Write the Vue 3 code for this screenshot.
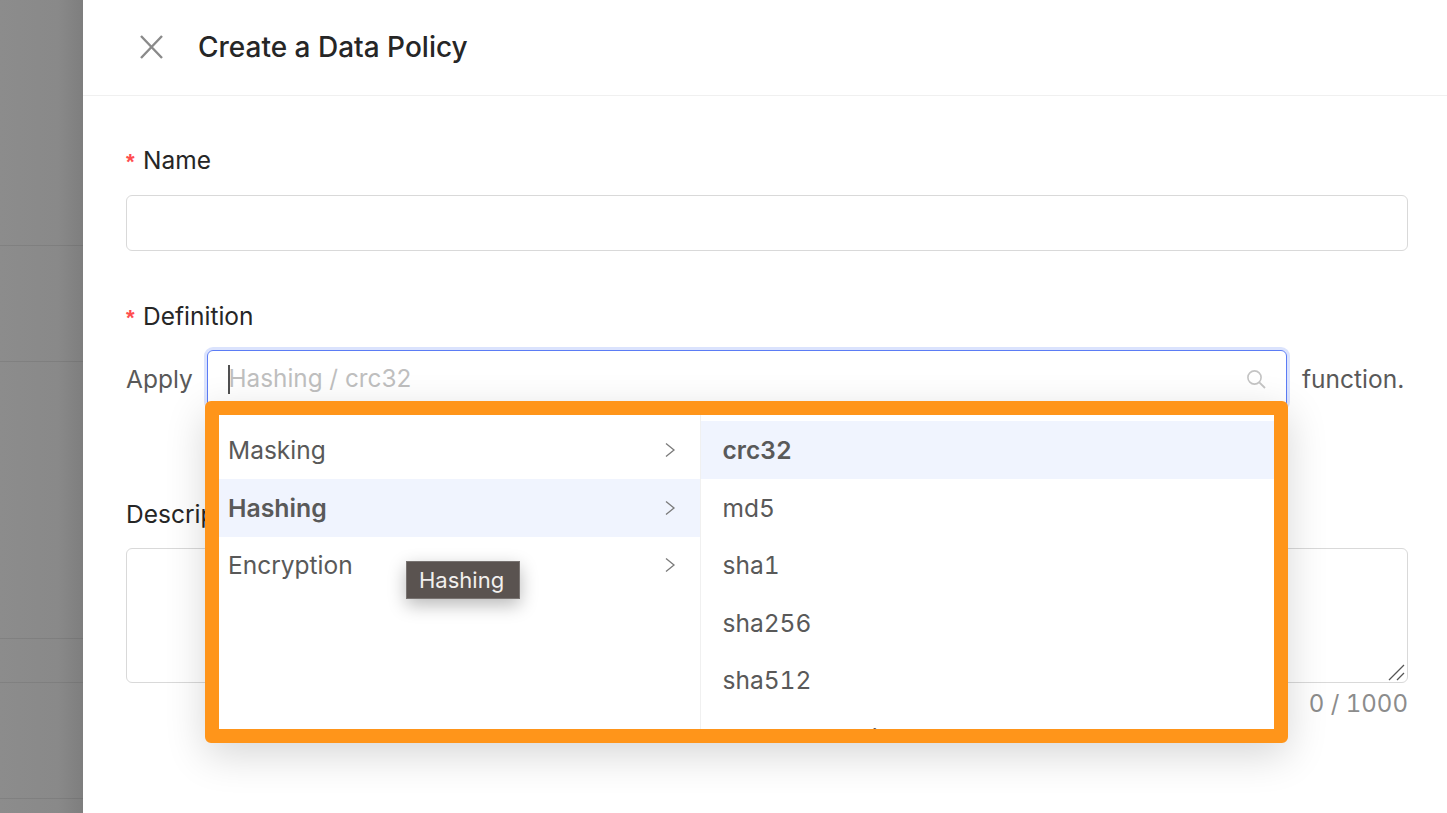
<template>
  <div class="page">
    <!-- dimmed page behind the drawer -->
    <div class="backdrop">
      <div class="bg-line" v-for="y in bgLines" :key="y" :style="{ top: y + 'px' }"></div>
    </div>

    <div class="drawer">
      <div class="drawer-header">
        <svg class="close-icon" width="24" height="24" viewBox="0 0 24 24">
          <path d="M2 1 L23 23 M23 1 L2 23" stroke="#8a8a8a" stroke-width="2.4" fill="none" />
        </svg>
        <h1 class="drawer-title">Create a Data Policy</h1>
      </div>

      <div class="drawer-body">
        <div class="field name-field">
          <label class="label"><span class="req">*</span>Name</label>
          <div class="input"></div>
        </div>

        <div class="field definition-field">
          <label class="label"><span class="req">*</span>Definition</label>
          <div class="def-row">
            <span class="def-text">Apply</span>
            <div class="select-wrap">
              <div class="select">
                <span class="caret"></span>
                <span class="placeholder">Hashing / crc32</span>
                <svg class="search-icon" width="22" height="22" viewBox="0 0 22 22">
                  <circle cx="9.5" cy="9.5" r="6.6" stroke="#c4c4c4" stroke-width="1.6" fill="none" />
                  <path d="M14.3 14.3 L20 20" stroke="#c4c4c4" stroke-width="1.8" fill="none" />
                </svg>
              </div>

              <!-- highlighted cascader menu -->
              <div class="dropdown">
                <div class="col col-left">
                  <div
                    v-for="item in groups"
                    :key="item"
                    class="opt"
                    :class="{ active: item === 'Hashing' }"
                  >
                    <span>{{ item }}</span>
                    <svg class="chev" width="12" height="18" viewBox="0 0 12 18">
                      <path d="M2 2.5 L10 9 L2 15.5" stroke="#7a7a7a" stroke-width="1.3" fill="none" />
                    </svg>
                  </div>
                </div>
                <div class="col col-right">
                  <div
                    v-for="item in functions"
                    :key="item"
                    class="opt"
                    :class="{ active: item === 'crc32' }"
                  >
                    {{ item }}
                  </div>
                </div>
                <div class="tooltip">Hashing</div>
              </div>
            </div>
            <span class="def-text fn">function.</span>
          </div>
        </div>

        <div class="field desc-field">
          <label class="label plain">Description</label>
          <div class="textarea">
            <svg class="resize" width="18" height="18" viewBox="0 0 18 18">
              <path d="M1 17 L16 2 M9 17 L16 10" stroke="#555" stroke-width="1.3" fill="none" />
            </svg>
          </div>
          <div class="count">0 / 1000</div>
        </div>
      </div>
    </div>
  </div>
</template>

<script setup>
const bgLines = [245, 361, 638, 682, 798];
const groups = ["Masking", "Hashing", "Encryption"];
const functions = ["crc32", "md5", "sha1", "sha256", "sha512", "sm3_hash_with_salt"];
</script>

<style>
html,
body {
  margin: 0;
  overflow: hidden;
  background: #fff;
}
</style>

<style scoped>
.page {
  display: flex;
  width: 1447px;
  height: 813px;
  overflow: hidden;
  font-family: Inter, "Liberation Sans", sans-serif;
  color: #262626;
}

.backdrop {
  position: relative;
  flex: 0 0 83px;
  background: linear-gradient(90deg, #8c8c8c 0%, #898989 70%, #7e7e7e 100%);
}

.bg-line {
  position: absolute;
  left: 0;
  right: 0;
  height: 1px;
  background: rgba(0, 0, 0, 0.08);
}

.drawer {
  flex: 1;
  background: #fff;
}

.drawer-header {
  display: flex;
  align-items: center;
  height: 95px;
  padding-left: 56px;
  border-bottom: 1px solid #f0f0f0;
  box-sizing: content-box;
}

.close-icon {
  flex: none;
  margin-right: 35px;
  margin-top: -1px;
}

.drawer-title {
  margin: 0 0 2px;
  font-size: 28px;
  font-weight: 500;
  line-height: 32px;
  color: #262626;
}

.drawer-body {
  padding: 0 39px 0 43px;
}

.field {
  display: flex;
  flex-direction: column;
}

.name-field {
  padding-top: 48px;
}

.definition-field {
  padding-top: 49px;
}

.desc-field {
  padding-top: 90px;
}

.label {
  font-size: 24.5px;
  line-height: 32px;
  color: #262626;
}

.req {
  display: inline-block;
  width: 17px;
  color: #ff4d4f;
  font-family: "Liberation Sans", sans-serif;
  font-size: 22px;
  font-weight: 700;
  line-height: 1;
}

.input {
  margin-top: 19px;
  height: 54px;
  border: 1px solid #d9d9d9;
  border-radius: 6px;
}

.def-row {
  display: flex;
  align-items: flex-start;
  margin-top: 18px;
}

.def-text {
  flex: none;
  width: 66px;
  font-size: 24.5px;
  line-height: 58px;
  color: #595959;
}

.fn {
  width: auto;
  margin-left: 15px;
}

.select-wrap {
  position: relative;
  z-index: 2;
  flex: none;
  width: 1080px;
  margin-left: 15px;
}

.select {
  display: flex;
  align-items: center;
  box-sizing: border-box;
  height: 58px;
  padding: 0 19px 0 20px;
  border: 1px solid #5b7cf5;
  border-radius: 6px;
  box-shadow: 0 0 0 3px #dbe3fd;
}

.caret {
  flex: none;
  width: 1.5px;
  height: 29px;
  background: #505050;
}

.placeholder {
  flex: 1;
  margin-top: -2px;
  margin-left: -1px;
  font-size: 24.3px;
  color: #bfbfbf;
}

.dropdown {
  position: absolute;
  left: -2px;
  top: 51px;
  display: flex;
  box-sizing: border-box;
  width: 1083px;
  height: 342px;
  border: 14px solid #ff951a;
  border-radius: 6px;
  background: #fff;
  box-shadow: 0 12px 40px rgba(0, 0, 0, 0.16);
}

.col {
  box-sizing: border-box;
  height: 100%;
  padding-top: 6px;
  overflow: hidden;
}

.col-left {
  flex: 0 0 482px;
  border-right: 1px solid #f0f0f0;
}

.col-right {
  flex: 1;
}

.opt {
  display: flex;
  align-items: center;
  justify-content: space-between;
  height: 57.5px;
  padding: 0 24px 0 9px;
  font-size: 24.5px;
  white-space: nowrap;
  color: #595959;
}

.opt:first-child {
  height: 58px;
}

.col-right .opt {
  padding-left: 21.5px;
  font-variant-numeric: tabular-nums;
}

.opt.active {
  background: #f0f4fe;
  font-weight: 600;
}

.col-left .opt.active {
  font-size: 24.8px;
}

.chev {
  flex: none;
}

.tooltip {
  position: absolute;
  left: 187px;
  top: 146px;
  box-sizing: border-box;
  width: 114px;
  height: 38px;
  padding-left: 12px;
  background: #5a5350;
  border: 1px solid #787371;
  box-shadow: 0 6px 18px rgba(0, 0, 0, 0.28);
  font-size: 22px;
  line-height: 36px;
  color: #f2f0ee;
}

.textarea {
  position: relative;
  margin-top: 18px;
  height: 133px;
  border: 1px solid #d9d9d9;
  border-radius: 6px;
}

.resize {
  position: absolute;
  right: 1px;
  bottom: 1px;
}

.count {
  margin-top: 5px;
  text-align: right;
  font-size: 24px;
  font-variant-numeric: tabular-nums;
  line-height: 32px;
  color: #8c8c8c;
}
</style>
